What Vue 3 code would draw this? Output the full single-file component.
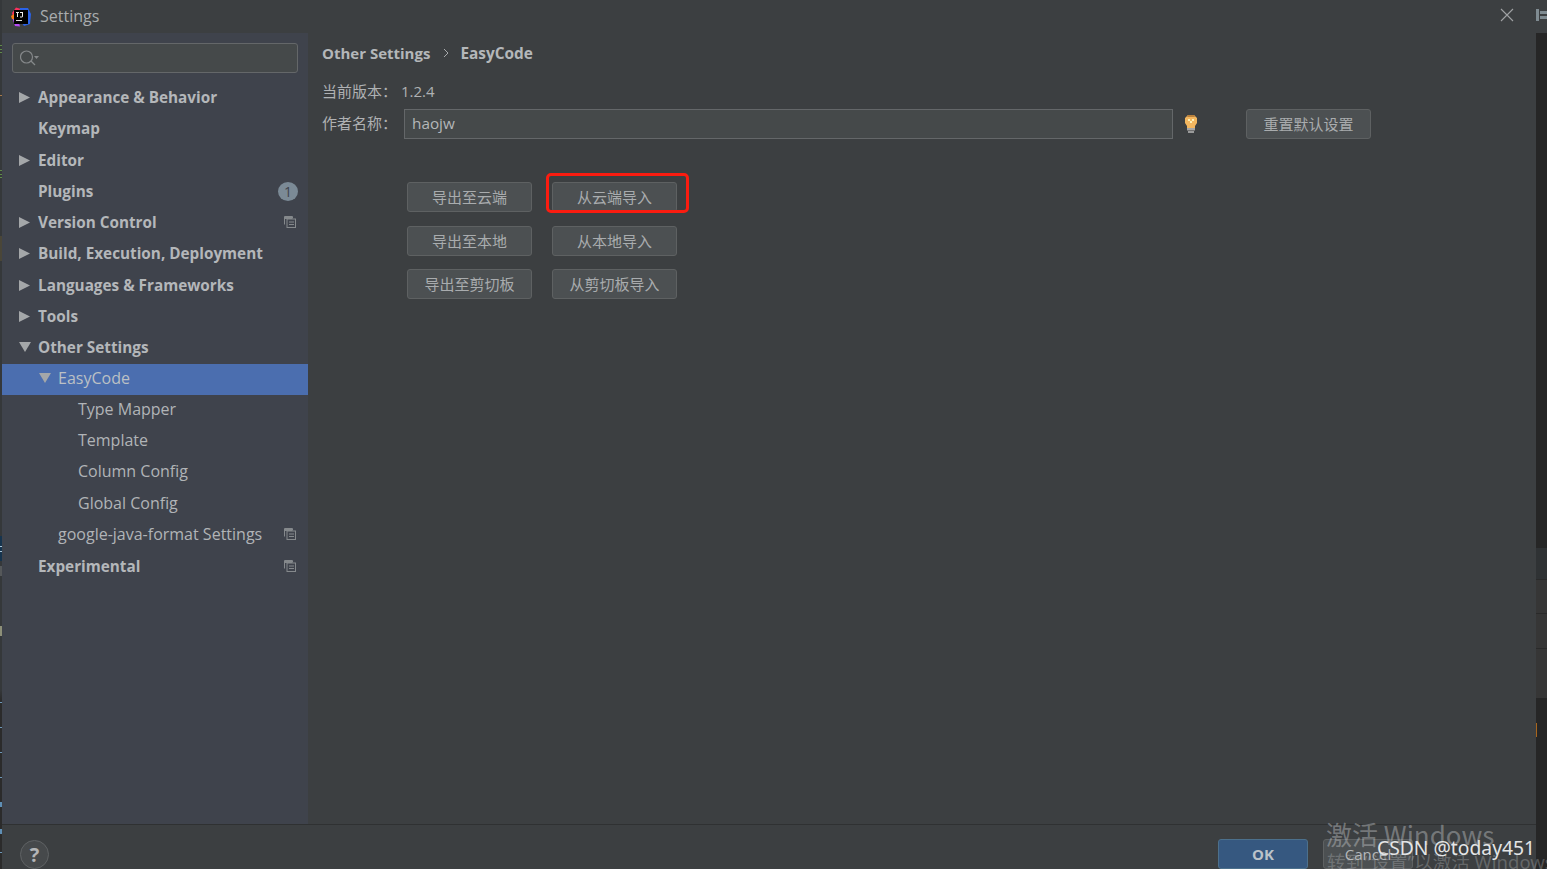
<script setup>
const rows = [
  { label: 'Appearance & Behavior', bold: true, arrow: 'right', indent: 0 },
  { label: 'Keymap', bold: true, indent: 0 },
  { label: 'Editor', bold: true, arrow: 'right', indent: 0 },
  { label: 'Plugins', bold: true, indent: 0, badge: '1' },
  { label: 'Version Control', bold: true, arrow: 'right', indent: 0, copy: true },
  { label: 'Build, Execution, Deployment', bold: true, arrow: 'right', indent: 0 },
  { label: 'Languages & Frameworks', bold: true, arrow: 'right', indent: 0 },
  { label: 'Tools', bold: true, arrow: 'right', indent: 0 },
  { label: 'Other Settings', bold: true, arrow: 'down', indent: 0 },
  { label: 'EasyCode', arrow: 'down', indent: 1, selected: true },
  { label: 'Type Mapper', indent: 2 },
  { label: 'Template', indent: 2 },
  { label: 'Column Config', indent: 2 },
  { label: 'Global Config', indent: 2 },
  { label: 'google-java-format Settings', indent: 1, copy: true },
  { label: 'Experimental', bold: true, indent: 0, copy: true }
]
const actions = ['导出至云端', '从云端导入', '导出至本地', '从本地导入', '导出至剪切板', '从剪切板导入']
const leftMarks = [
  { y: 45, h: 1, c: '#5f8a4a' }, { y: 49, h: 1, c: '#5f8a4a' }, { y: 52, h: 1, c: '#5f8a4a' },
  { y: 95, h: 1, c: '#a8794a' },
  { y: 170, h: 1, c: '#5f8a4a' }, { y: 174, h: 1, c: '#5f8a4a' }, { y: 177, h: 1, c: '#5f8a4a' },
  { y: 236, h: 25, c: '#4a4638' },
  { y: 536, h: 25, c: '#16344e' }, { y: 546, h: 1, c: '#a9c4d8' }, { y: 551, h: 1, c: '#a9c4d8' },
  { y: 566, h: 10, c: '#55585a' },
  { y: 626, h: 10, c: '#8d8f78' },
  { y: 702, h: 1, c: '#6d97b8' }, { y: 727, h: 1, c: '#6d97b8' }, { y: 752, h: 1, c: '#6d97b8' },
  { y: 777, h: 1, c: '#6d97b8' }, { y: 802, h: 5, c: '#5f8fb5' }, { y: 829, h: 5, c: '#5f8fb5' },
  { y: 852, h: 1, c: '#6d97b8' }
]
</script>

<template>
  <div class="screen">
    <div class="edge-left">
      <i v-for="m in leftMarks" :key="m.y" class="left-mark" :style="{ top: m.y + 'px', height: m.h + 'px', background: m.c }"></i>
    </div>
    <div class="dialog">
      <header class="titlebar">
        <svg class="logo" width="20" height="20" viewBox="0 0 20 20">
          <path d="M1 6 L5 0.500 L10 2 L7 10 L2 10Z" fill="#fe315d" />
          <path d="M9 1 L17 1 L20 7 L19 17 L13 19 L8 12Z" fill="#2a63e8" />
          <path d="M1 10 L6 9 L9 19.500 L4 19Z" fill="#b74af7" />
          <path d="M0 9 L3 7 L4 12 L1 12Z" fill="#f97a12" />
          <rect x="3" y="3" width="14" height="14" fill="#000" />
          <rect x="5" y="13" width="6" height="1" fill="#ddd" />
          <path d="M5 5h3v1H7v4H6V6H5zM9 5h3v4.500l-1 1H9V9.500h2V6H9z" fill="#eee" />
        </svg>
        <span class="title">Settings</span>
        <svg class="close" width="14" height="14" viewBox="0 0 14 14">
          <path d="M1 1 L13 13 M13 1 L1 13" stroke="#a0a2a4" stroke-width="1.100" fill="none" />
        </svg>
      </header>

      <div class="body">
        <aside class="sidebar">
          <div class="search">
            <svg width="24" height="18" viewBox="0 0 24 18">
              <circle cx="6.500" cy="8" r="6" stroke="#85888a" stroke-width="1.200" fill="none" />
              <path d="M11 12 L15 16" stroke="#85888a" stroke-width="1.300" />
              <path d="M14 7h5l-2.500 3z" fill="#85888a" />
            </svg>
          </div>
          <nav class="tree">
            <div
              v-for="row in rows"
              :key="row.label"
              class="row"
              :class="[`indent-${row.indent}`, { selected: row.selected, bold: row.bold }]"
            >
              <svg v-if="row.arrow === 'right'" class="arrow" width="11" height="11" viewBox="0 0 11 11">
                <path d="M0 0 L11 5.500 L0 11Z" fill="#a4a7a9" />
              </svg>
              <svg v-else-if="row.arrow === 'down'" class="arrow" width="12" height="10" viewBox="0 0 12 10">
                <path d="M0 0 L12 0 L6 10Z" fill="#a4a7a9" />
              </svg>
              <span class="label">{{ row.label }}</span>
              <span v-if="row.badge" class="badge">{{ row.badge }}</span>
              <svg v-if="row.copy" class="copy" width="12" height="12" viewBox="0 0 12 12">
                <path d="M0.500 8.500V0.500H8.500V2.500" stroke="#85898c" fill="none" />
                <rect x="1" y="1" width="7" height="2" fill="#85898c" />
                <rect x="3" y="3" width="8.500" height="8.500" stroke="#85898c" fill="none" />
                <path d="M5 6h5M5 8.500h5" stroke="#85898c" />
              </svg>
            </div>
          </nav>
        </aside>

        <main class="content">
          <div class="crumbs">
            <span>Other Settings</span>
            <svg class="crumb-sep" width="6" height="10" viewBox="0 0 6 10">
              <path d="M1 1 L5 5 L1 9" stroke="#a8aaac" stroke-width="1" fill="none" />
            </svg>
            <span class="crumb-last">EasyCode</span>
          </div>
          <div class="version">
            <span class="field-label">当前版本：</span>
            <span class="version-number">1.2.4</span>
          </div>
          <div class="author">
            <span class="field-label author-label">作者名称：</span>
            <div class="input">haojw</div>
            <svg class="bulb" width="14" height="20" viewBox="0 0 14 20">
              <path d="M4 1h6l3 3v5l-2 3v2H3v-2L1 9V4z" fill="#f2b65f" />
              <path d="M4 1h6l1 2H3z" fill="#b9803c" />
              <path d="M4 5h2v2H4zM8 5h2v2H8zM6 7h2v2H6z" fill="#fdf0b8" />
              <rect x="3" y="14" width="8" height="2" fill="#a5a5a5" />
              <rect x="3" y="16" width="8" height="1" fill="#6e6e6e" />
              <rect x="4" y="17" width="6" height="2" fill="#9a9a9a" />
            </svg>
            <button class="btn reset">重置默认设置</button>
          </div>
          <div class="actions">
            <button v-for="a in actions" :key="a" class="btn">{{ a }}</button>
            <div class="highlight"></div>
          </div>
        </main>
      </div>

      <footer class="footer">
        <div class="help">?</div>
        <div class="footer-buttons">
          <button class="ok">OK</button>
          <button class="cancel">Cancel</button>
        </div>
      </footer>
    </div>
    <div class="edge-right">
      <div class="edge-top">
        <svg width="11" height="12" viewBox="0 0 11 12">
          <rect x="0" y="0" width="3" height="12" fill="#7f8b91" />
          <rect x="4" y="2" width="7" height="3" fill="#7f8b91" />
          <rect x="4" y="7" width="7" height="3" fill="#7f8b91" />
        </svg>
      </div>
      <div class="edge-dark edge-upper"></div>
      <div class="edge-slate"></div>
      <div class="edge-tools"></div>
      <div class="edge-tools edge-tools-mid"></div>
      <div class="edge-tools edge-tools-low"></div>
      <div class="edge-dark edge-lower"><i class="edge-mark"></i></div>
    </div>

    <div class="wm wm-activate">激活 Windows</div>
    <div class="wm wm-go">转到“设置”以激活 Windows</div>
    <div class="wm wm-csdn">CSDN @today451</div>
  </div>
</template>

<style>
html, body { margin: 0; background: #3c3f41; overflow: hidden; }
</style>

<style scoped>
.screen {
  position: relative;
  display: flex;
  width: 1547px;
  height: 869px;
  overflow: hidden;
  font-family: "Open Sans", "Noto Sans", "Noto Sans CJK SC", sans-serif;
  color: #b4b7b9;
}
.edge-left {
  position: relative;
  width: 2px;
  background: linear-gradient(#35383a 0, #35383a 690px, #2b2b2b 700px);
  flex: none;
}
.left-mark { position: absolute; left: 0; width: 2px; }
.dialog {
  width: 1534px;
  flex: none;
  display: flex;
  flex-direction: column;
  background: #3c3f41;
}
.titlebar {
  height: 33px;
  flex: none;
  display: flex;
  align-items: center;
  padding-left: 9px;
  padding-right: 22px;
}
.logo { flex: none; }
.title { margin-left: 9px; margin-bottom: 2px; font-size: 16px; color: #a9acae; }
.close { margin-left: auto; margin-top: -4px; }
.body { flex: 1; display: flex; min-height: 0; }
.sidebar {
  width: 306px;
  flex: none;
  background: #3f434c;
  padding-top: 10px;
  box-sizing: border-box;
}
.search {
  margin-left: 10px;
  width: 286px;
  height: 30px;
  box-sizing: border-box;
  border: 1px solid #646769;
  border-radius: 3px;
  background: #45494a;
  padding: 5px 0 0 7px;
}
.search svg { display: block; }
.tree { margin-top: 10px; }
.row {
  position: relative;
  height: 31.25px;
  box-sizing: border-box;
  padding-bottom: 4px;
  display: flex;
  align-items: center;
  font-size: 16px;
  color: #b1b4b7;
}
.row.bold { padding-bottom: 3px; font-size: 15.3px; font-weight: 700; color: #b4b7ba; }
.row.selected { background: #4b6eaf; color: #bbc0c5; height: 31px; }
.indent-0 { padding-left: 36px; }
.indent-1 { padding-left: 56px; }
.indent-2 { padding-left: 76px; }
.arrow { position: absolute; top: 9px; }
.indent-0 .arrow { left: 17px; }
.indent-1 .arrow { left: 37px; }
.badge {
  position: absolute;
  left: 276px;
  top: 5px;
  width: 20px;
  height: 19px;
  border-radius: 50%;
  background: #7b8a96;
  color: #3f434c;
  font-size: 14px;
  font-weight: 400;
  line-height: 19px;
  text-align: center;
}
.copy { position: absolute; left: 282px; top: 8px; }
.content {
  flex: 1;
  position: relative;
  padding: 9px 0 0 14px;
  font-size: 15px;
  color: #afb1b3;
}
.crumbs {
  display: flex;
  align-items: center;
  gap: 11px;
  height: 22px;
  font-size: 15px;
  font-weight: 700;
  color: #b4b7b9;
}
.crumb-sep { margin-left: 2px; }
.crumb-last { font-size: 15.4px; }
.version {
  display: flex;
  align-items: center;
  height: 22px;
  margin-top: 16px;
}
.field-label { width: 80px; font-size: 15px; margin-bottom: 2px; }
.version-number { font-size: 15px; margin-left: -1px; margin-bottom: 1px; }
.author { display: flex; align-items: center; height: 30px; margin-top: 7px; }
.author-label { width: 82px; margin-bottom: 4px; }
.input {
  width: 769px;
  height: 30px;
  box-sizing: border-box;
  border: 1px solid #646769;
  background: #45494a;
  padding-left: 7px;
  font-size: 15.3px;
  line-height: 27px;
  color: #b4b7b9;
}
.bulb { margin-left: 11px; }
.btn {
  width: 125px;
  height: 30px;
  padding: 0;
  box-sizing: border-box;
  border: 1px solid #5e6162;
  border-radius: 3px;
  background: #4c5052;
  color: #a9acae;
  font-family: "Noto Sans CJK SC", sans-serif;
  font-size: 15px;
  line-height: 28px;
}
.reset { margin-left: 48px; }
.actions {
  position: relative;
  display: grid;
  grid-template-columns: 125px 125px;
  grid-auto-rows: 30px;
  column-gap: 20px;
  row-gap: 13.5px;
  margin: 43px 0 0 85px;
  width: 270px;
}
.highlight {
  position: absolute;
  left: 139px;
  top: -9px;
  width: 143px;
  height: 40px;
  box-sizing: border-box;
  border: 3px solid #fb1c10;
  border-radius: 5px;
}
.footer {
  height: 45px;
  flex: none;
  border-top: 1px solid #2f3132;
  box-sizing: border-box;
  display: flex;
  position: relative;
}
.help {
  position: absolute;
  left: 18px;
  top: 15px;
  width: 29px;
  height: 29px;
  box-sizing: border-box;
  border-radius: 50%;
  border: 1px solid #5f6264;
  background: #46494b;
  color: #b3b5b7;
  font-size: 20px;
  font-weight: 700;
  line-height: 27px;
  text-align: center;
}
.footer-buttons {
  display: flex;
  gap: 15px;
  margin-left: 1216px;
  padding-top: 14px;
}
.ok, .cancel {
  width: 90px;
  height: 30px;
  padding: 0;
  box-sizing: border-box;
  border-radius: 3px;
  font-family: "Open Sans", sans-serif;
  font-size: 15px;
}
.ok { background: #365880; border: 1px solid #4c708c; color: #bbc3c9; font-weight: 700; }
.cancel { background: #4c5052; border: 1px solid #5e6162; color: #b4b7b9; }
.edge-right { width: 11px; flex: none; display: flex; flex-direction: column; }
.edge-top { height: 33px; background: #3c3f41; padding-top: 9px; box-sizing: border-box; flex: none; }
.edge-top svg { display: block; }
.edge-dark { background: #262626; }
.edge-upper { height: 515px; flex: none; }
.edge-slate { height: 31px; background: #2f3234; flex: none; }
.edge-tools { height: 34px; background: #363636; border-top: 1px solid #2a2a2a; box-sizing: border-box; flex: none; }
.edge-tools-mid { height: 35px; }
.edge-tools-low { height: 50px; }
.edge-lower { flex: 1; position: relative; }
.edge-mark { position: absolute; left: 0; top: 25px; width: 1px; height: 14px; background: #a8651c; }
.wm { position: absolute; white-space: nowrap; pointer-events: none; }
.wm-activate {
  left: 1326px;
  top: 815px;
  font-size: 26px;
  line-height: 38px;
  color: rgba(200, 202, 204, 0.42);
  font-family: "Noto Sans CJK SC", "Noto Sans", sans-serif;
}
.wm-go {
  left: 1327px;
  top: 848px;
  font-size: 18.500px;
  line-height: 28px;
  color: rgba(200, 202, 204, 0.3);
  font-family: "Noto Sans", "Noto Sans CJK SC", sans-serif;
}
.wm-csdn {
  left: 1377px;
  top: 833px;
  font-size: 19.3px;
  line-height: 30px;
  color: #e4e5e6;
  font-family: "Noto Sans", sans-serif;
}
</style>
